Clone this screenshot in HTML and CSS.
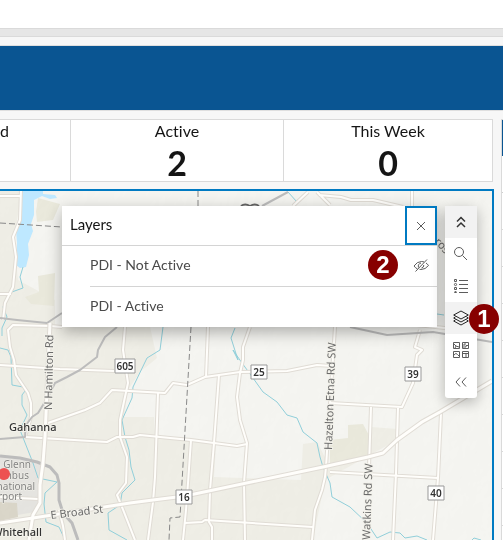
FILE: index.html
```html
<!DOCTYPE html>
<html lang="en">
<head>
<meta charset="utf-8">
<meta name="viewport" content="width=device-width, initial-scale=1">
<title>Dashboard</title>
<link rel="stylesheet" href="styles.css">
</head>
<body>
<div class="topbar"></div>
<div class="strip"></div>
<header class="banner"></header>
<div class="dashboard">
  <main class="content">
    <section class="stats">
      <div class="stat stat-cut"><span class="stat-label">d</span></div>
      <div class="stat"><span class="stat-label">Active</span><strong class="stat-value">2</strong></div>
      <div class="stat"><span class="stat-label">This Week</span><strong class="stat-value">0</strong></div>
    </section>
    <section class="map">
      <svg class="basemap" viewBox="0 191 492 349" preserveAspectRatio="xMinYMin slice">
        <defs>
          <filter id="relief" x="0" y="0" width="100%" height="100%">
            <feTurbulence type="fractalNoise" baseFrequency="0.035 0.025" numOctaves="4" seed="7"/>
            <feDiffuseLighting surfaceScale="2" lighting-color="#fff"><feDistantLight azimuth="225" elevation="62"/></feDiffuseLighting>
          </filter>
          <g id="roads">
            <path d="M21 190L20 220L13 237L16 257L13 287L5 303L3 320M0 196H20M0 294H11M62 327L50 326L13 325L8 330L10 347L14 360L16 375L28 393L31 403L31 417L25 437"/>
            <path d="M0 365L60 369L114 371M48 423L85 410L100 403L112 390L165 393L173 383L187 385L205 377L240 372L287 371L317 365L332 366"/>
            <path d="M25 437L107 442L117 437L133 437L140 435L170 438L191 440L237 446L247 444"/>
            <path d="M125 327L123 350L128 383L120 420V437L127 457L126 483L117 495L122 507L135 540M158 393L155 477L153 502L148 540"/>
            <path d="M208 327L206 377M250 327L243 347V360L240 373L237 397L240 420L247 443L244 483L245 540M219 375L214 443L210 490L209 522L212 527V540"/>
            <path d="M191 440L188 483L186 510L183 540M185 523L202 522L205 520L313 527M335 327L326 467L325 477L322 490L315 510L312 540"/>
            <path d="M412 191V206M293 206L308 192M317 192L330 205M319 195L341 197L351 200L373 200L403 207M420 330L415 347L422 350L417 355L413 383L402 407L330 403"/>
            <path d="M371 407L369 467M398 408L396 473L393 540M441 413L438 478L433 540M330 472L438 478M0 497L38 499M59 510L63 526L65 540M350 318L445 328"/>
          </g>
          <g id="mainroads">
            <path d="M50 323L45 437L43 463L40 485V503L33 515L29 540"/>
            <path d="M0 523L33 518L130 503L153 500L185 496L323 467L368 457L383 453L397 440L422 422L440 412L492 381"/>
          </g>
        </defs>
        <rect x="0" y="191" width="1400" height="1000" fill="#f5f5f1"/>
        <path class="land" d="M0 191H22L14 238L18 280L55 300V327H150L157 358L140 372L128 390L124 417L154 417L155 437L190 440L216 444L214 477L301 480L303 444L317 442L330 467L369 456L371 427L397 429L397 440L325 480L313 540H0Z"/>
        <path class="hill" d="M38 198L60 204L53 220L37 222L36 212ZM38 276L55 273L54 306L31 304L25 297L39 292ZM348 425L363 424L370 437L369 458L330 465V440L348 438Z"/>
        <path class="airport" d="M0 456L40 463L42 488L35 512L0 518Z"/>
        <path class="apron" d="M0 502L17 503L18 517L0 521Z"/>
        <rect class="relief" x="0" y="191" width="1400" height="1000" filter="url(#relief)"/>
        <path class="lake" d="M21 191H43L43 194L55 195L57 198L50 199L42 196L34 200V215L31 224L33 231L28 244L29 255L26 267L20 268L16 265L17 243L16 230L20 217Z"/>
        <g class="stream">
          <path d="M23 267L20 277L23 288L9 293L3 307L7 317L2 328L2 336M0 348L8 350L11 357L12 385L23 387L25 391L22 395V405L27 415L20 430L33 463L38 478L57 482L45 493L44 504L46 522L59 527L65 540"/>
          <path d="M163 327L160 350L147 358L133 387L132 398L122 420L125 437L129 450L131 467L135 480L122 493L120 505L108 513L109 530L127 540"/>
          <path d="M235 328L231 338L238 360L233 350L242 363L253 378L263 392L277 402L287 415L297 418L303 432L317 443L320 457L323 467L330 483L332 497L350 507L367 523L377 538L390 532L400 533L405 538L417 536L427 540"/>
          <path d="M288 192L297 202M430 313L444 315M472 540L474 538L481 540"/>
        </g>
        <use class="casing" href="#roads"/><use class="road" href="#roads"/>
        <g class="highway">
          <path d="M0 318L17 320L47 323L62 313M117 327L105 337L98 350L97 357L80 370L67 377L55 383L50 393L43 405L38 413L32 417L26 425L25 437L0 439M262 206L288 192M350 327L387 335L433 332L445 334L492 342"/>
          <path class="wide" d="M0 456L20 458L37 462L50 467L57 475L59 483V500L63 513L72 523L78 540"/>
        </g>
        <use class="casing main" href="#mainroads"/><use class="road main" href="#mainroads"/>
        <path class="boundary" d="M0 223L62 227M198 191V206M191 327L180 517L170 518L169 540"/>
        <path class="shield-top" d="M241 206Q245 203 250 206Q255 203 259 206"/>
        <g class="shield">
          <rect x="115" y="359" width="20" height="14"/><text x="125" y="370">605</text>
          <rect x="251" y="365" width="16" height="14"/><text x="259" y="376">25</text>
          <rect x="405" y="367" width="16" height="14"/><text x="413" y="378">39</text>
          <rect x="176" y="490" width="16" height="14"/><text x="184" y="501">16</text>
          <rect x="428" y="486" width="16" height="14"/><text x="436" y="497">40</text>
        </g>
        <g class="street">
          <text transform="translate(52 410) rotate(-89)">N Hamilton Rd</text>
          <text transform="translate(332 450) rotate(-88)">Hazelton Etna Rd SW</text>
          <text transform="translate(370 540) rotate(-88)">Watkins Rd SW</text>
          <text transform="translate(51 519) rotate(-7)">E Broad St</text>
          <text transform="translate(434 242) rotate(48)">ros</text>
        </g>
        <g class="place">
          <text x="9" y="431">Gahanna</text>
          <text class="end" x="42" y="536">Whitehall</text>
        </g>
        <g class="poi">
          <text x="31" y="468">n Glenn</text><text x="29" y="479">mbus</text><text x="35" y="490">national</text><text x="22" y="500">rport</text>
        </g>
        <circle class="incident" cx="4" cy="474" r="6"/>
      </svg>

      <section class="layers" aria-labelledby="layers-title">
        <div class="layers-head">
          <h2 id="layers-title">Layers</h2>
          <button class="close" type="button" aria-label="Close">
            <svg width="16" height="16" viewBox="0 0 16 16"><path d="M4 4L12 12M12 4L4 12"/></svg>
          </button>
        </div>
        <ul class="layer-list">
          <li>PDI - Not Active
            <button class="visibility" type="button" aria-label="Show layer">
              <svg width="16" height="16" viewBox="0 0 16 16"><path d="M4.500 12Q2.500 11 1 9Q4 4.500 8.500 4.500Q10 4.500 11 5M13 6Q14.500 7 15.500 8.500Q12.500 12.500 8 12.500Q7 12.500 6.500 12.300M2.500 14.500L14 2.500M5.500 10.500Q4.500 7 8 6M10.800 8Q11 10.500 8.500 11"/></svg>
            </button>
            <span class="badge badge-row">2</span>
          </li>
          <li>PDI - Active</li>
        </ul>
      </section>

      <nav class="tools" aria-label="Map tools">
        <button class="selected" type="button" aria-label="Collapse toolbar">
          <svg width="16" height="16" viewBox="0 0 16 16"><path class="strong" d="M4 7.500L8 3.500L12 7.500M4 13L8 9L12 13"/></svg>
        </button>
        <button type="button" aria-label="Search">
          <svg width="16" height="16" viewBox="0 0 16 16"><circle cx="6" cy="6" r="4.500"/><path d="M9.500 9.500L14 14"/></svg>
        </button>
        <button type="button" aria-label="Legend">
          <svg width="16" height="16" viewBox="0 0 16 16"><path d="M6 2.500H15M6 6.500H15M6 10.500H15M6 14.500H15M1.500 1.500H3.500V3.500H1.500ZM1.500 9.500H3.500V11.500H1.500ZM1.500 14.500H3.500L2.500 13Z"/><circle cx="2.500" cy="6.500" r="1.100"/></svg>
        </button>
        <button class="selected" type="button" aria-label="Layers">
          <svg width="16" height="16" viewBox="0 0 16 16"><path class="dark" d="M8 1L15.300 5L8 9L.7 5ZM2.500 6.800L.7 8L8 12L15.300 8L13.500 6.800M2.500 9.800L.7 11L8 15L15.300 11L13.500 9.800"/></svg>
          <span class="badge badge-tool">1</span>
        </button>
        <button type="button" aria-label="Basemap gallery">
          <svg width="16" height="16" viewBox="0 0 16 16"><path d="M.5 .5H6.500V6.500H.5ZM9.500 .5H15.500V6.500H9.500ZM.5 9.500H6.500V15.500H.5ZM9.500 9.500H15.500V15.500H9.500ZM1 2L3 4L2 6M3 4L6 5M12 1V3H9.500M15 3.500H13V5H10M1 13Q3 10 4.500 12.500L6 14M10 11.500H15M13 12V15"/></svg>
        </button>
        <button type="button" aria-label="Collapse">
          <svg width="16" height="16" viewBox="0 0 16 16"><path d="M7 3.500L3 8L7 12.500M13 3.500L9 8L13 12.500"/></svg>
        </button>
      </nav>
    </section>
  </main>
  <aside class="side">
    <div class="side-head"></div>
    <ul class="side-list"><li></li><li></li><li></li><li></li><li></li><li></li><li></li><li></li><li></li><li></li></ul>
  </aside>
</div>
</body>
</html>
```
FILE: styles.css
```css
* { box-sizing: border-box; }
body {
  margin: 0;
  min-height: 100vh;
  display: flex;
  flex-direction: column;
  overflow: hidden;
  background: #f7f7f7;
  color: #151515;
  font-family: Lato, "Liberation Sans", sans-serif;
  font-size: 14px;
  font-variant-ligatures: none;
}
ul { margin: 0; padding: 0; list-style: none; }
button { padding: 0; border: 0; background: none; font: inherit; color: inherit; }
.topbar { height: 28px; background: #fff; }
.strip { height: 9px; background: #e6e6e6; border: solid #dadada; border-width: 1px 0; }
.banner { height: 66px; margin-top: 8px; background: #0a5592; border: solid #dfdfdf; border-width: 1px 0; }
.dashboard { flex: 1; display: flex; gap: 7px; padding-top: 8px; }
.content { flex: 1; min-width: 0; display: flex; flex-direction: column; gap: 7px; }

.stats {
  display: grid;
  grid-template-columns: 70px 213fr 209fr;
  margin-right: 1px;
  background: #fff;
  border: solid #dadada;
  border-width: 1px 1px 1px 0;
}
.stat { height: 61px; display: flex; flex-direction: column; align-items: center; }
.stat + .stat { border-left: 1px solid #dadada; }
.stat-cut { align-items: flex-start; }
.stat-label { font-size: 16px; line-height: 21px; }
.stat-value { font-size: 34px; font-weight: 700; line-height: 43px; }

.map { position: relative; flex: 1; min-height: 351px; border: solid #007ac2; border-width: 2px 2px 0 0; background: #f3f3ee; }
.basemap { position: absolute; inset: 0; width: 100%; height: 100%; fill: none; stroke-linejoin: round; }
.basemap .land { fill: #efeee6; }
.basemap .hill { fill: #eae9dc; }
.basemap .airport { fill: #e5e4e0; }
.basemap .apron { fill: #dad6c9; }
.basemap .relief { mix-blend-mode: multiply; opacity: .08; }
.basemap .lake { fill: #bee8ff; }
.stream { stroke: #91cfda; stroke-width: 1; }
.casing { stroke: #e0dcd5; stroke-width: 4; }
.road { stroke: #fffefb; stroke-width: 2; }
.casing.main { stroke-width: 5; }
.road.main { stroke-width: 3; }
.highway { stroke: #bcbcbc; stroke-width: 2; }
.highway .wide { stroke-width: 3; }
.boundary { stroke: #888; stroke-width: 1; stroke-dasharray: 6 3; }
.shield-top { stroke: #666; stroke-width: 2; }
.shield rect { fill: #fff; stroke: #999; }
.shield text { fill: #333; font: 600 10px "Noto Sans", sans-serif; text-anchor: middle; }
.street text, .place text, .poi text { font-family: "Noto Sans", sans-serif; paint-order: stroke; stroke: #f3f2eb; stroke-width: 2px; }
.street text { fill: #6b6b6b; font-size: 11px; }
.place text { fill: #333; font-size: 11px; font-weight: 500; }
.place .end { text-anchor: end; }
.poi text { fill: #828282; font-size: 10px; text-anchor: end; stroke-width: 1px; }
.incident { fill: #ed5151; }

.layers { position: absolute; top: 15px; left: 62px; right: 55px; background: #fff; box-shadow: 0 5px 15px rgba(0, 0, 0, .3); }
.layers-head { height: 40px; padding-left: 8px; display: flex; align-items: center; justify-content: space-between; border-bottom: 1px solid #d4d4d4; }
.layers-head h2 { margin: 0; padding-bottom: 4px; font-size: 15px; font-weight: 400; }
.close { width: 32px; height: 39px; border: 2px solid #007ac2; display: grid; place-items: center; }
.layer-list { padding-left: 28px; color: #4a4a4a; font-size: 14px; }
.layer-list li { position: relative; height: 41px; padding-bottom: 3px; display: flex; align-items: center; justify-content: space-between; }
.layer-list li + li { border-top: 1px solid #d4d4d4; }
.layer-list li:first-child { height: 40px; }
.visibility { width: 32px; height: 32px; display: grid; place-items: center; }
.layers svg, .tools svg { fill: none; stroke: #5c5c5c; stroke-width: 1; }

.tools { position: absolute; top: 15px; right: 15px; width: 32px; border-radius: 3px; background: #fff; box-shadow: 0 4px 14px rgba(0, 0, 0, .28); }
.tools button { position: relative; width: 32px; height: 32px; display: grid; place-items: center; }
.tools .selected { background: #f2f2f2; }
.tools .dark { stroke: #222; }
.tools .strong { stroke: #333; stroke-width: 1.500; }

.badge { position: absolute; width: 30px; height: 30px; border-radius: 50%; background: #870000; color: #fff; font: bold 24px/30px "Liberation Sans", sans-serif; text-align: center; }
.badge-row { right: 39px; top: 4px; }
.badge-tool { left: 24px; top: 2px; }

.side { width: 2px; border-left: 1px solid #dadada; background: #fff; overflow: hidden; }
.side-head { height: 37px; background: #0a5592; border-top: 1px solid #dadada; }
.side-list li { height: 37px; border-bottom: 1px solid #cfcfcf; }
.side-list li + li { border-bottom-color: #dadada; }
```
